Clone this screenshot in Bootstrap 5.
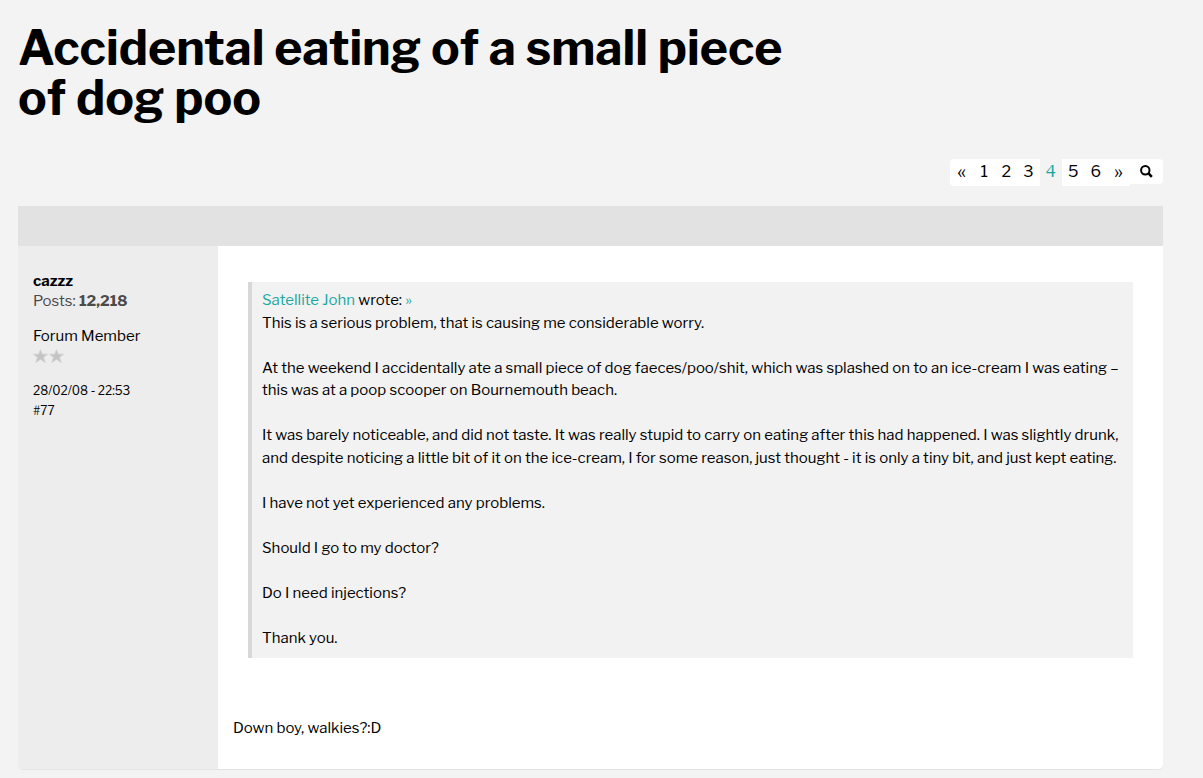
<!DOCTYPE html>
<html lang="en">
<head>
<meta charset="utf-8">
<meta name="viewport" content="width=device-width, initial-scale=1">
<title>Forum thread</title>
<link href="https://cdn.jsdelivr.net/npm/bootstrap@5.3.0/dist/css/bootstrap.min.css" rel="stylesheet">
<style>
body { background: #f3f3f3; color: #000; font-family: "Libre Franklin", "Liberation Sans", Arial, sans-serif; font-size: 15px; line-height: 1.5; }
a { color: #1ba8a4; text-decoration: none; }
.thread { padding: 23px 40px 8px 18px; }
.thread-title { max-width: 800px; font-size: 48px; font-weight: 700; line-height: 50px; margin-bottom: 36px; }
.pager { font-size: 16px; line-height: 25px; margin-bottom: 20px; }
.pager a, .pager span { display: block; min-width: 22px; padding: 0 6px 2px; background: #fff; color: #000; text-align: center; }
.pager .arrow { min-width: 23px; font-size: 20px; }
.pager li:first-child a { border-radius: 4px 0 0 4px; }
.pager .current { background: transparent; color: #1ba8a4; }
.search-btn { width: 33px; height: 25px; background: #fff; border: 0; border-radius: 0 4px 4px 0; padding: 0 0 1px; }
.bar { height: 40px; background: #e2e2e2; }
.post { border-bottom: 1px solid #e3e3e3; border-radius: 0 0 5px 5px; overflow: hidden; background: #fff; }
.author { width: 200px; background: #ededed; padding: 25px 15px; line-height: 20px; }
.count { color: #4a4a4a; }
.rank { margin-top: 15px; }
.stars { margin-top: 3px; }
.stamp { margin-top: 18px; font-size: 12px; }
.message { min-width: 0; padding: 36px 15px 29px; }
.quoted { margin: 0 15px 59px; padding: 7px 10px 9px; border-left: 4px solid #d8d8d8; background: #f2f2f2; }
</style>
</head>
<body>
<main class="thread">
  <h1 class="thread-title">Accidental eating of a small piece of dog poo</h1>
  <nav class="d-flex justify-content-end align-items-start pager" aria-label="Pages">
    <ul class="list-unstyled d-flex mb-0">
      <li><a class="arrow" href="#">«</a></li>
      <li><a href="#">1</a></li>
      <li><a href="#">2</a></li>
      <li><a href="#">3</a></li>
      <li><span class="current" aria-current="page">4</span></li>
      <li><a href="#">5</a></li>
      <li><a href="#">6</a></li>
      <li><a class="arrow" href="#">»</a></li>
    </ul>
    <button class="search-btn d-flex align-items-center justify-content-center" type="button" aria-label="Search">
      <svg width="13" height="13" viewBox="0 0 13 13" fill="none" stroke="#000"><circle cx="5.3" cy="5.2" r="4.2" stroke-width="2"/><path d="M8.3 8.2l3.5 3.6" stroke-width="2.6"/></svg>
    </button>
  </nav>
  <div class="bar"></div>
  <article class="post d-flex">
    <aside class="author flex-shrink-0">
      <div class="fw-bold">cazzz</div>
      <div class="count">Posts: <b>12,218</b></div>
      <div class="rank">Forum Member</div>
      <svg class="d-block stars" width="32" height="14" viewBox="0 0 32 14" fill="#c4c4c4" stroke="#d2d2d2" role="img" aria-label="Two stars"><path id="star" d="M7.5 .8l1.800 4.400h5.200L10.500 8.400l1.700 5L7.500 10.400 2.800 13.400l1.700-5L.5 5.200h5.200z"/><use href="#star" x="16"/></svg>
      <div class="stamp">28/02/08 - 22:53<br>#77</div>
    </aside>
    <div class="message flex-grow-1">
      <blockquote class="quoted">
        <a href="#">Satellite John</a> wrote: <a href="#">»</a><br>
        This is a serious problem, that is causing me considerable worry.<br><br>
        At the weekend I accidentally ate a small piece of dog faeces/poo/shit, which was splashed on to an ice-cream I was eating – this was at a poop scooper on Bournemouth beach.<br><br>
        It was barely noticeable, and did not taste. It was really stupid to carry on eating after this had happened. I was slightly drunk, and despite noticing a little bit of it on the ice-cream, I for some reason, just thought - it is only a tiny bit, and just kept eating.<br><br>
        I have not yet experienced any problems.<br><br>
        Should I go to my doctor?<br><br>
        Do I need injections?<br><br>
        Thank you.
      </blockquote>
      <div>Down boy, walkies?:D</div>
    </div>
  </article>
</main>
<script src="https://cdn.jsdelivr.net/npm/bootstrap@5.3.0/dist/js/bootstrap.bundle.min.js"></script>
</body>
</html>
